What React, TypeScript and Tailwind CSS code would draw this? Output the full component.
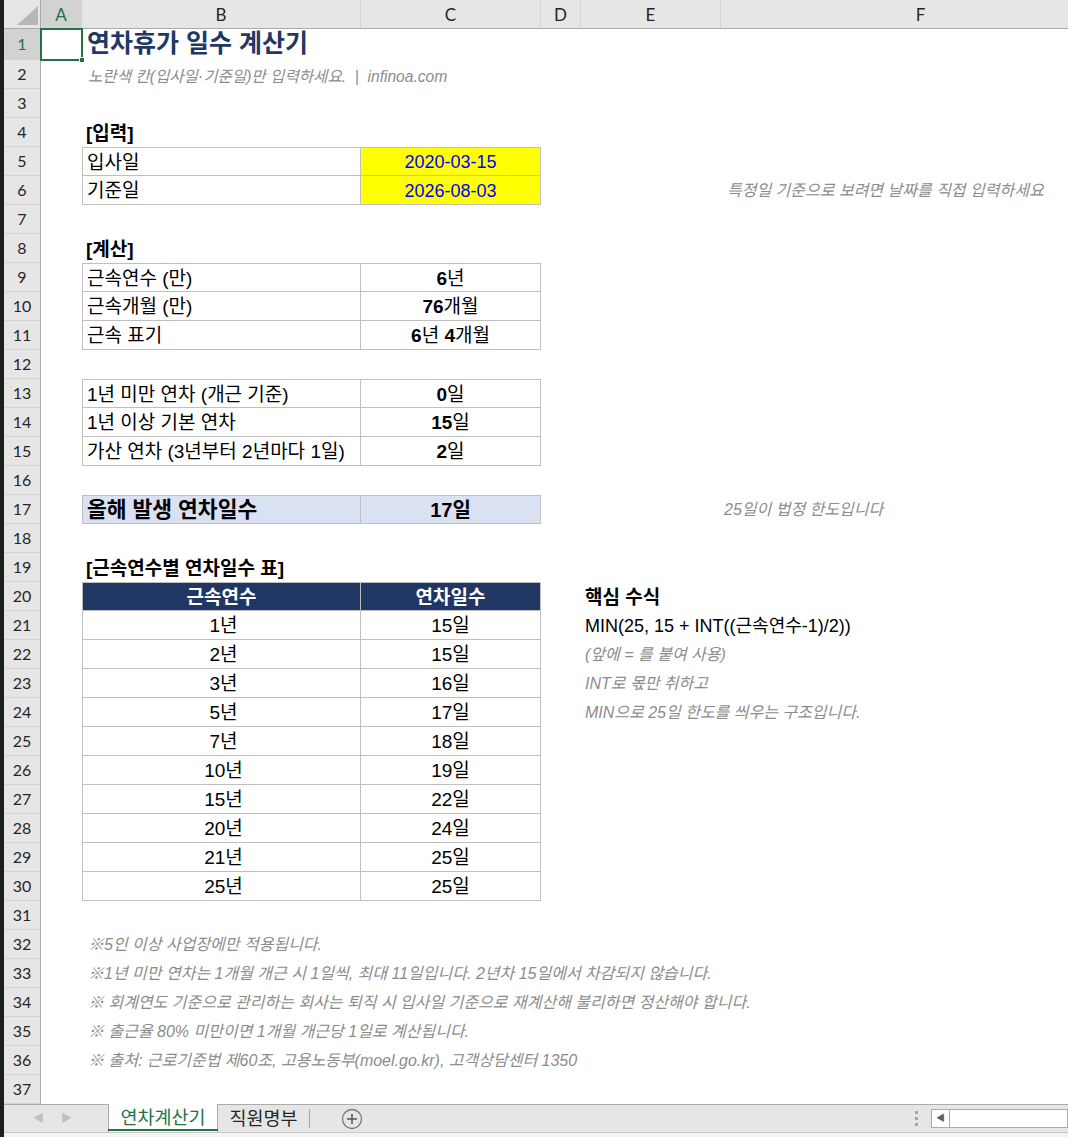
import React from "react";

// Excel-like sheet: 연차휴가 일수 계산기
const GRID = "grid grid-cols-[37px_41px_279px_180px_40px_140px_400px] grid-rows-[100%]";
const BODY = "font-['Liberation_Sans','Noto_Sans_CJK_KR',sans-serif]";
const HDR = "font-['Lato','Noto_Sans_CJK_KR',sans-serif]";

const TB = "border-l border-r border-b border-[#bfbfbf] pl-[4px]";
const TC = "border-r border-b border-[#bfbfbf] justify-center";
const NOTE = "italic text-[16px] text-[#8c8c8c]";

type RowData = {
  b?: React.ReactNode;
  c?: React.ReactNode;
  e?: React.ReactNode;
  f?: React.ReactNode;
  bCls?: string;
  cCls?: string;
  eCls?: string;
  fCls?: string;
};

function Cell({ cls, children }: { cls?: string; children?: React.ReactNode }) {
  return (
    <div className={`flex items-center min-w-0 min-h-0 whitespace-nowrap leading-[1.15] pt-[2px] ${cls ?? ""}`}>
      {children}
    </div>
  );
}

function Row({ n, d, tall, sel }: { n: number; d: RowData; tall?: boolean; sel?: boolean }) {
  return (
    <div className={`${GRID} ${tall ? "h-[31px]" : "h-[29px]"}`}>
      <div
        className={`${HDR} flex items-center justify-center border-r border-b border-r-[#ababab] border-b-[#d4d4d4] text-[16px] leading-none ${
          sel ? "bg-[#d2d2d2] text-[#217346]" : "bg-[#e6e6e6] text-[#262626]"
        }`}
      >
        {n}
      </div>
      <div className="relative">
        {sel && (
          <div className="absolute -left-px -top-px -right-px -bottom-px z-10 border-2 border-[#217346]">
            <div className="absolute -right-[4px] -bottom-[4px] h-[6px] w-[6px] border border-white bg-[#217346]" />
          </div>
        )}
      </div>
      <Cell cls={d.bCls ?? "pl-[5px]"}>{d.b}</Cell>
      <Cell cls={d.cCls ?? "justify-center"}>{d.c}</Cell>
      <Cell />
      <Cell cls={d.eCls ?? "pl-[4px]"}>{d.e}</Cell>
      <Cell cls={d.fCls ?? "pl-[5px]"}>{d.f}</Cell>
    </div>
  );
}

// digits bold, unit regular (like the calc block)
function Val({ num, unit }: { num: string; unit: string }) {
  return (
    <span>
      <span className="font-bold">{num}</span>
      {unit}
    </span>
  );
}

const tenure = [
  ["1년", "15일"],
  ["2년", "15일"],
  ["3년", "16일"],
  ["5년", "17일"],
  ["7년", "18일"],
  ["10년", "19일"],
  ["15년", "22일"],
  ["20년", "24일"],
  ["21년", "25일"],
  ["25년", "25일"],
];

const side: RowData[] = [
  { e: "MIN(25, 15 + INT((근속연수-1)/2))", eCls: "pl-[4px] text-[18px] text-black" },
  { e: "(앞에 = 를 붙여 사용)", eCls: `pl-[4px] ${NOTE}` },
  { e: "INT로 몫만 취하고", eCls: `pl-[4px] ${NOTE}` },
  { e: "MIN으로 25일 한도를 씌우는 구조입니다.", eCls: `pl-[4px] ${NOTE}` },
];

function buildRows(): RowData[] {
  const rows: RowData[] = [];
  rows[1] = {
    b: "연차휴가 일수 계산기",
    bCls: "pl-[5px] !pt-0 pb-[2px] text-[25px] font-bold text-[#1f3864]",
  };
  rows[2] = {
    b: "노란색 칸(입사일·기준일)만 입력하세요.  |  infinoa.com",
    bCls: `pl-[6px] !pt-[5px] italic text-[15.6px] text-[#8c8c8c] whitespace-pre`,
  };
  rows[4] = { b: "[입력]", bCls: "pl-[4px] font-bold" };
  rows[5] = {
    b: "입사일",
    bCls: `${TB} border-t`,
    c: "2020-03-15",
    cCls: `${TC} border-t bg-[#ffff00] text-[#0000ff] text-[18px]`,
  };
  rows[6] = {
    b: "기준일",
    bCls: TB,
    c: "2026-08-03",
    cCls: `${TC} bg-[#ffff00] text-[#0000ff] text-[18px]`,
    f: "특정일 기준으로 보려면 날짜를 직접 입력하세요",
    fCls: `pl-[6px] ${NOTE}`,
  };
  rows[8] = { b: "[계산]", bCls: "pl-[4px] font-bold" };
  rows[9] = { b: "근속연수 (만)", bCls: `${TB} border-t`, c: <Val num="6" unit="년" />, cCls: `${TC} border-t` };
  rows[10] = { b: "근속개월 (만)", bCls: TB, c: <Val num="76" unit="개월" />, cCls: TC };
  rows[11] = {
    b: "근속 표기",
    bCls: TB,
    c: (
      <span>
        <span className="font-bold">6</span>년 <span className="font-bold">4</span>개월
      </span>
    ),
    cCls: TC,
  };
  rows[13] = { b: "1년 미만 연차 (개근 기준)", bCls: `${TB} border-t`, c: <Val num="0" unit="일" />, cCls: `${TC} border-t` };
  rows[14] = { b: "1년 이상 기본 연차", bCls: TB, c: <Val num="15" unit="일" />, cCls: TC };
  rows[15] = { b: "가산 연차 (3년부터 2년마다 1일)", bCls: TB, c: <Val num="2" unit="일" />, cCls: TC };
  rows[17] = {
    b: "올해 발생 연차일수",
    bCls: `${TB} border-t bg-[#d9e1f2] font-bold text-[21.5px]`,
    c: "17일",
    cCls: `${TC} border-t bg-[#d9e1f2] font-bold text-[20px]`,
    f: "25일이 법정 한도입니다",
    fCls: `pl-[3px] ${NOTE}`,
  };
  rows[19] = { b: "[근속연수별 연차일수 표]", bCls: "pl-[4px] font-bold" };
  rows[20] = {
    b: "근속연수",
    bCls: "border border-[#bfbfbf] bg-[#203764] text-white font-bold justify-center",
    c: "연차일수",
    cCls: "border-r border-y border-[#bfbfbf] bg-[#203764] text-white font-bold justify-center",
    e: "핵심 수식",
    eCls: "pl-[4px] font-bold",
  };
  tenure.forEach(([y, d], i) => {
    const s = side[i] ?? {};
    rows[21 + i] = { b: y, bCls: `${TB} justify-center pl-0`, c: d, cCls: TC, ...s };
  });
  const notes = [
    "※5인 이상 사업장에만 적용됩니다.",
    "※1년 미만 연차는 1개월 개근 시 1일씩, 최대 11일입니다. 2년차 15일에서 차감되지 않습니다.",
    "※ 회계연도 기준으로 관리하는 회사는 퇴직 시 입사일 기준으로 재계산해 불리하면 정산해야 합니다.",
    "※ 출근율 80% 미만이면 1개월 개근당 1일로 계산됩니다.",
    "※ 출처: 근로기준법 제60조, 고용노동부(moel.go.kr), 고객상담센터 1350",
  ];
  notes.forEach((t, i) => {
    rows[32 + i] = { b: t, bCls: `pl-[6px] ${NOTE}` };
  });
  return rows;
}

function ColHeader() {
  const cols = [
    { l: "A", sel: true },
    { l: "B" },
    { l: "C" },
    { l: "D" },
    { l: "E" },
    { l: "F" },
  ];
  return (
    <div className={`${GRID} h-[29px] bg-[#e6e6e6] border-b border-[#ababab]`}>
      <div className="relative border-r border-[#ababab]">
        <svg className="absolute left-0 top-0" width="37" height="28" viewBox="0 0 37 28">
          <polygon points="34,6 34,25 13,25" fill="#b7b7b7" />
        </svg>
      </div>
      {cols.map((c) => (
        <div
          key={c.l}
          className={`${HDR} flex items-center justify-center border-r border-[#d4d4d4] text-[17px] leading-none ${
            c.sel ? "bg-[#d2d2d2] text-[#217346]" : "text-[#262626]"
          }`}
        >
          {c.l}
        </div>
      ))}
    </div>
  );
}

function SheetTabs() {
  return (
    <div>
      <div className={`${BODY} flex h-[28px] border-t border-[#ababab] bg-[#e6e6e6]`}>
        <div className="flex w-[104px] items-center gap-[17px] pl-[29px] text-[11px] text-[#c0c0c0]">
          <span>◀</span>
          <span>▶</span>
        </div>
        <div className="-mt-px relative flex w-[110px] items-center justify-center border-x border-[#ababab] bg-white text-[18.5px] text-[#217346]">
          연차계산기
          <div className="absolute bottom-[1px] -left-px -right-px h-[2px] bg-[#217346]" />
        </div>
        <div className="flex w-[91px] items-center justify-center text-[18.5px] text-[#262626]">직원명부</div>
        <div className="my-[4px] w-px bg-[#a6a6a6]" />
        <div className="flex w-[84px] items-center justify-center">
          <svg width="22" height="22" viewBox="0 0 22 22">
            <circle cx="11" cy="11" r="9.5" fill="none" stroke="#7a7a7a" strokeWidth="1.3" />
            <path d="M11 6v10M6 11h10" stroke="#555" strokeWidth="1.5" />
          </svg>
        </div>
        <div className="ml-auto flex items-center">
          <div className="mr-[13px] flex flex-col gap-[3px]">
            <div className="h-[3px] w-[3px] bg-[#a6a6a6]" />
            <div className="h-[3px] w-[3px] bg-[#a6a6a6]" />
            <div className="h-[3px] w-[3px] bg-[#a6a6a6]" />
          </div>
          <div className="flex h-[19px] w-[137px] border border-[#ababab] bg-white">
            <div className="flex w-[18px] items-center justify-center border-r border-[#ababab] text-[9px] text-[#606060]">
              ◀
            </div>
          </div>
        </div>
      </div>
      <div className="h-[5px] border-t border-[#c8c8c8] bg-[#f3f3f3]" />
    </div>
  );
}

export default function App() {
  const rows = buildRows();
  const nums = Array.from({ length: 37 }, (_, i) => i + 1);
  return (
    <div className={`${BODY} h-[1137px] w-[1068px] overflow-hidden border-l-4 border-[#1b201d] bg-white text-[19px] text-black`}>
      <div className="w-[1064px] overflow-hidden">
        <ColHeader />
        {nums.map((n) => (
          <Row key={n} n={n} d={rows[n] ?? {}} tall={n === 1} sel={n === 1} />
        ))}
      </div>
      <SheetTabs />
    </div>
  );
}
